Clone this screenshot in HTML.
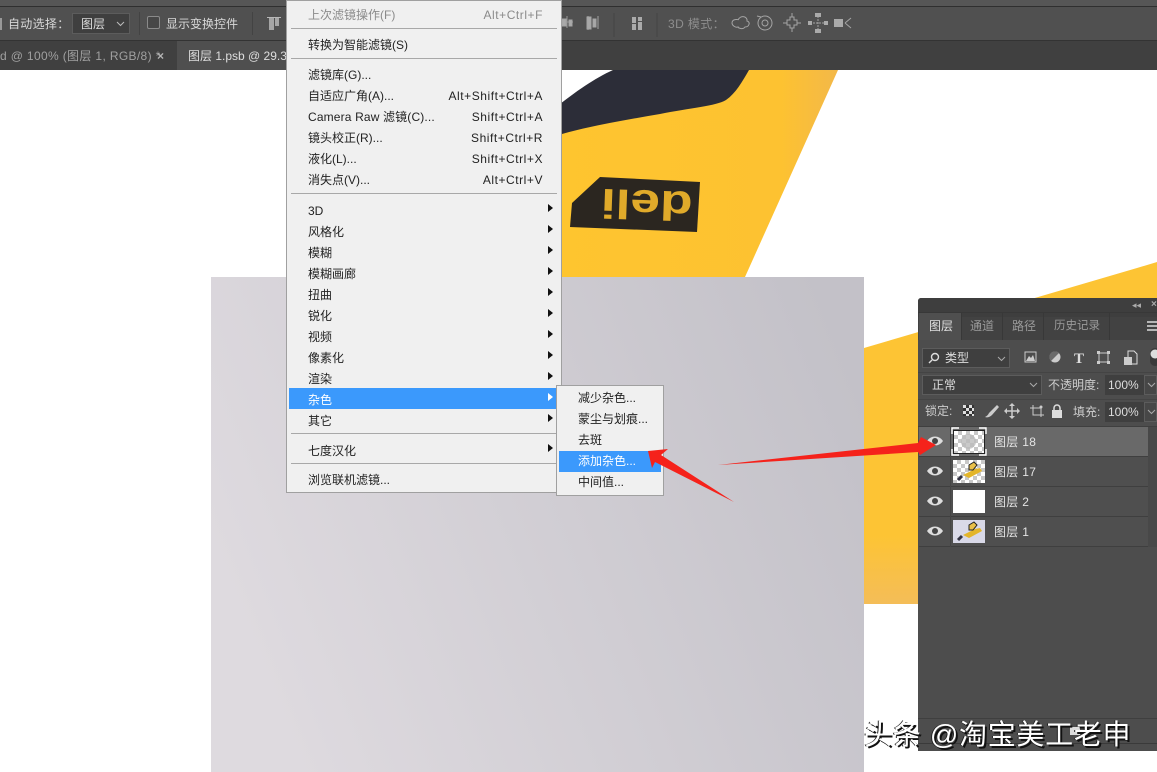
<!DOCTYPE html>
<html><head><meta charset="utf-8"><style>
html,body{margin:0;padding:0;background:#fff}
#r{position:relative;width:1157px;height:772px;overflow:hidden;background:#fff;font-family:"Liberation Sans","Noto Sans CJK SC",sans-serif;font-size:12px}
#r div,#r span.t{position:absolute}
.t{white-space:nowrap;line-height:16px;position:absolute}
.m{color:#222;left:308px}
.k{color:#222;right:614px;letter-spacing:.55px}
.l{color:#dcdcdc}
.a{width:0;height:0;border-left:5px solid #111;border-top:4px solid transparent;border-bottom:4px solid transparent;left:548px}
.sep{left:291px;width:266px;height:1px;background:#a8a8a8}
.row{left:919px;width:229px;height:29px;border-bottom:1px solid #3f3f3f;background:#4f4f4f}
.th{left:953px;width:32px;height:23px;background:#fff}
.ck{background-color:#fff;background-image:linear-gradient(45deg,#c8c8c8 25%,transparent 25%,transparent 75%,#c8c8c8 75%),linear-gradient(45deg,#c8c8c8 25%,transparent 25%,transparent 75%,#c8c8c8 75%);background-size:8px 8px;background-position:0 0,4px 4px}
.dd{background:#3f3f3f;border:1px solid #5c5c5c;box-sizing:border-box}
.wm{font-family:"Liberation Sans","Noto Sans CJK SC",sans-serif;font-size:28px;line-height:32px;color:#fff;text-shadow:2px 2px 0 #111,-1px 0 0 #222;white-space:nowrap;position:absolute}
</style></head><body><div id="r">

<svg style="position:absolute;left:0;top:0" width="1157" height="772">
<defs><linearGradient id="g" x1="0" y1="0.55" x2="1" y2="0.25"><stop offset="0" stop-color="#dedadf"/><stop offset="1" stop-color="#c3c1c8"/></linearGradient>
<linearGradient id="y" x1="0" y1="0" x2="1" y2="0"><stop offset="0" stop-color="#fec52f"/><stop offset=".8" stop-color="#fdc231"/><stop offset="1" stop-color="#f3b849"/></linearGradient>
<linearGradient id="y2" x1="0" y1="0" x2="0" y2="1"><stop offset="0" stop-color="#fdc434"/><stop offset=".8" stop-color="#fdc434"/><stop offset="1" stop-color="#f4bd58"/></linearGradient></defs>
<polygon points="555,108 613,70 838,70 745,277 555,277" fill="url(#y)"/>
<rect x="211" y="277" width="653" height="495" fill="url(#g)"/>
<path d="M555,108 C575,92 595,78 613,70 L749,70 C742,82 736,93 726,100 C716,106 690,108 660,114 C625,120 590,126 562,134 L555,136Z" fill="#2c2d38"/>
<path d="M600,177 L700,182 L697,232 L570,227 L572,203Z" fill="#2b2620"/>
<text transform="translate(693,192) rotate(182) scale(1.3,1)" font-family="Liberation Sans" font-weight="bold" font-size="41" fill="#e0aa2a">deli</text>
<polygon points="864,348 1137,268 1157,262 1157,604 864,604" fill="url(#y2)"/>
</svg>

<!-- toolbar -->
<div style="left:0;top:0;width:1157px;height:6px;background:#565656"></div>
<div style="left:0;top:6px;width:1157px;height:1px;background:#2f2f2f"></div>
<div style="left:0;top:7px;width:1157px;height:33px;background:#505050"></div>
<div style="left:0;top:40px;width:1157px;height:1px;background:#333"></div>
<div style="left:0;top:41px;width:1157px;height:29px;background:#404040"></div>
<div style="left:177px;top:41px;width:120px;height:29px;background:#4f4f4f"></div>
<span class="t" style="left:8px;top:16px;color:#d8d8d8;letter-spacing:.3px">自动选择：</span>
<div class="dd" style="left:72px;top:13px;width:58px;height:21px"></div>
<span class="t" style="left:81px;top:16px;color:#ddd">图层</span>
<svg style="position:absolute;left:116px;top:21px" width="9" height="6"><path d="M1,1 L4.5,4.5 L8,1" fill="none" stroke="#bbb"/></svg>
<div style="left:147px;top:16px;width:11px;height:11px;border:1px solid #8a8a8a;background:#474747;border-radius:2px"></div>
<span class="t" style="left:166px;top:16px;color:#d8d8d8;font-size:12px">显示变换控件</span>
<div style="left:139px;top:12px;width:1px;height:23px;background:#434343"></div>
<div style="left:252px;top:12px;width:1px;height:23px;background:#434343"></div>
<div style="left:267px;top:17px;width:14px;height:1px;background:#b8b8b8"></div>
<div style="left:269px;top:18px;width:5px;height:12px;background:#a5a5a5"></div>
<div style="left:275px;top:18px;width:4px;height:8px;background:#a5a5a5"></div>
<div style="left:0;top:18px;width:2px;height:12px;background:#999"></div>

<svg style="position:absolute;left:560px;top:8px" width="300" height="32" fill="none" stroke="#a4a4a4">
<path d="M1,14 h12 M7,8 v12 M28,8 v14" stroke="#999"/><rect x="2" y="11" width="4" height="7" fill="#aaa"/><rect x="9" y="12" width="3" height="6" fill="#aaa"/>
<rect x="27" y="9" width="4" height="12" fill="#a8a8a8"/><rect x="33" y="11" width="3" height="8" fill="#a8a8a8"/><path d="M38,8 v13"/>
<rect x="72" y="9" width="4" height="6" fill="#aaa" stroke="none"/><rect x="72" y="16" width="4" height="6" fill="#aaa" stroke="none"/><rect x="78" y="9" width="4" height="4" fill="#aaa" stroke="none"/><rect x="78" y="14" width="4" height="8" fill="#aaa" stroke="none"/>
<path d="M54,5 v24 M97,5 v24" stroke="#444"/>
<path d="M172,15 c0,-4 6,-4 6,-3 c3,-6 10,-3 9,1 c4,1 2,6 -2,6 c-2,3 -7,1 -7,0 c-3,1 -6,-2 -6,-4z"/>
<circle cx="205" cy="15" r="7"/><circle cx="205" cy="15" r="3"/><path d="M197,8 l4,1"/>
<path d="M230,9 h4 v3 h3 v5 h-3 v3 h-4 v-3 h-3 v-5 h3z M232,5 v4 M232,20 v4 M223,15 h4 M237,15 h4"/>
<path d="M250,15 h16 M258,8 v16" stroke-dasharray="2 1"/><rect x="255" y="5" width="6" height="4" fill="#aaa" stroke="none"/><rect x="255" y="21" width="6" height="4" fill="#aaa" stroke="none"/><rect x="248" y="13" width="4" height="4" fill="#aaa" stroke="none"/><rect x="264" y="13" width="4" height="4" fill="#aaa" stroke="none"/>
<rect x="274" y="11" width="9" height="8" fill="#aaa" stroke="none"/><path d="M285,15 l6,-5 M285,15 l6,5"/>
</svg>
<span class="t" style="left:668px;top:16px;color:#8e8e8e;letter-spacing:.4px">3D 模式：</span>

<span class="t" style="left:0;top:48px;color:#a0a0a0;font-size:12px;letter-spacing:.35px">d @ 100% (图层 1, RGB/8) *</span>
<span class="t" style="left:157px;top:48px;color:#b5b5b5;font-weight:bold">×</span>
<span class="t" style="left:188px;top:48px;color:#dedede">图层 1.psb @ 29.3</span>

<!-- main menu -->
<div style="left:286px;top:0;width:274px;height:491px;background:#f0f0f0;border:1px solid #a0a0a0"></div>
<div style="left:289px;top:388px;width:268px;height:21px;background:#3b99fc"></div>
<div class="sep" style="top:28px"></div>
<div class="sep" style="top:58px"></div>
<div class="sep" style="top:193px"></div>
<div class="sep" style="top:433px"></div>
<div class="sep" style="top:463px"></div>

<span class="t m" style="top:7px;color:#8a8a8a">上次滤镜操作(F)</span><span class="t k" style="top:7px;color:#8a8a8a">Alt+Ctrl+F</span>
<span class="t m" style="top:37px">转换为智能滤镜(S)</span>
<span class="t m" style="top:67px">滤镜库(G)...</span>
<span class="t m" style="top:88px">自适应广角(A)...</span><span class="t k" style="top:88px">Alt+Shift+Ctrl+A</span>
<span class="t m" style="top:109px;letter-spacing:.15px">Camera Raw 滤镜(C)...</span><span class="t k" style="top:109px">Shift+Ctrl+A</span>
<span class="t m" style="top:130px">镜头校正(R)...</span><span class="t k" style="top:130px">Shift+Ctrl+R</span>
<span class="t m" style="top:151px">液化(L)...</span><span class="t k" style="top:151px">Shift+Ctrl+X</span>
<span class="t m" style="top:172px">消失点(V)...</span><span class="t k" style="top:172px">Alt+Ctrl+V</span>
<span class="t m" style="top:203px">3D</span>
<span class="t m" style="top:224px">风格化</span>
<span class="t m" style="top:245px">模糊</span>
<span class="t m" style="top:266px">模糊画廊</span>
<span class="t m" style="top:287px">扭曲</span>
<span class="t m" style="top:308px">锐化</span>
<span class="t m" style="top:329px">视频</span>
<span class="t m" style="top:350px">像素化</span>
<span class="t m" style="top:371px">渲染</span>
<span class="t m" style="top:392px;color:#fff">杂色</span>
<span class="t m" style="top:413px">其它</span>
<span class="t m" style="top:443px">七度汉化</span>
<span class="t m" style="top:472px">浏览联机滤镜...</span>
<div class="a" style="top:204px"></div><div class="a" style="top:225px"></div><div class="a" style="top:246px"></div><div class="a" style="top:267px"></div><div class="a" style="top:288px"></div><div class="a" style="top:309px"></div><div class="a" style="top:330px"></div><div class="a" style="top:351px"></div><div class="a" style="top:372px"></div>
<div class="a" style="top:393px;border-left-color:#fff"></div><div class="a" style="top:414px"></div><div class="a" style="top:444px"></div>

<!-- submenu -->
<div style="left:556px;top:385px;width:106px;height:109px;background:#f0f0f0;border:1px solid #a0a0a0"></div>
<div style="left:559px;top:451px;width:102px;height:21px;background:#3b99fc"></div>
<span class="t" style="left:578px;top:390px;color:#222">减少杂色...</span>
<span class="t" style="left:578px;top:411px;color:#222">蒙尘与划痕...</span>
<span class="t" style="left:578px;top:432px;color:#222">去斑</span>
<span class="t" style="left:578px;top:453px;color:#fff">添加杂色...</span>
<span class="t" style="left:578px;top:474px;color:#222">中间值...</span>

<!-- panel -->
<div style="left:918px;top:298px;width:239px;height:453px;background:#4d4d4d;border-top-left-radius:3px"></div>
<div style="left:918px;top:298px;width:239px;height:19px;background:#3e3e3e;border-top-left-radius:3px"></div>
<div style="left:918px;top:317px;width:239px;height:23px;background:#424242"></div>
<div style="left:919px;top:312px;width:42px;height:28px;background:#4f4f4f"></div>
<div style="left:961px;top:312px;width:1px;height:28px;background:#383838"></div>
<div style="left:1002px;top:312px;width:1px;height:28px;background:#383838"></div>
<div style="left:1043px;top:312px;width:1px;height:28px;background:#383838"></div>
<div style="left:1109px;top:312px;width:1px;height:28px;background:#383838"></div>
<div style="left:918px;top:312px;width:239px;height:1px;background:#383838"></div>
<span class="t" style="left:929px;top:318px;color:#e0e0e0">图层</span>
<span class="t" style="left:970px;top:318px;color:#9a9a9a">通道</span>
<span class="t" style="left:1012px;top:318px;color:#9a9a9a">路径</span>
<span class="t" style="left:1054px;top:318px;color:#9a9a9a;font-size:11.5px">历史记录</span>
<span class="t" style="left:1132px;top:299px;color:#aaa;font-size:9px;line-height:12px">◂◂</span>
<span class="t" style="left:1151px;top:299px;color:#aaa;font-size:10px;line-height:12px;font-weight:bold">×</span>
<div style="left:1147px;top:321px;width:10px;height:2px;background:#b5b5b5"></div>
<div style="left:1147px;top:325px;width:10px;height:2px;background:#b5b5b5"></div>
<div style="left:1147px;top:329px;width:10px;height:2px;background:#b5b5b5"></div>

<div class="dd" style="left:922px;top:348px;width:88px;height:20px"></div>
<svg style="position:absolute;left:927px;top:351px" width="14" height="14" fill="none" stroke="#ddd" stroke-width="1.4"><circle cx="8" cy="6" r="3.5"/><path d="M5,9 L2,12"/></svg>
<span class="t" style="left:945px;top:350px;color:#ddd">类型</span>
<svg style="position:absolute;left:997px;top:356px" width="9" height="6"><path d="M1,1 L4.5,4.5 L8,1" fill="none" stroke="#aaa"/></svg>
<svg style="position:absolute;left:1020px;top:348px" width="137" height="20">
<rect x="5" y="4" width="11" height="10" fill="none" stroke="#ccc"/><path d="M6,13 L9,8 L11,10 L13,7 L15,13Z" fill="#ccc"/>
<circle cx="35" cy="9" r="5.5" fill="#ccc"/><path d="M31,13 A5.5,5.5 0 0 1 39,5 Z" fill="#6a6a6a"/>
<text x="54" y="15" font-family="Liberation Serif" font-weight="bold" font-size="15" fill="#ddd">T</text>
<rect x="79" y="5" width="9" height="9" fill="none" stroke="#ccc"/><rect x="77" y="3" width="3" height="3" fill="#ccc"/><rect x="87" y="3" width="3" height="3" fill="#ccc"/><rect x="77" y="13" width="3" height="3" fill="#ccc"/><rect x="87" y="13" width="3" height="3" fill="#ccc"/>
<path d="M108,3 h6 l3,3 v10 h-9z" fill="none" stroke="#ddd"/><rect x="104" y="9" width="8" height="8" fill="#ccc"/>
<rect x="130" y="0" width="10" height="18" rx="5" fill="#3a3a3a"/><circle cx="135" cy="6" r="4.5" fill="#ddd"/>
</svg>
<div style="left:918px;top:372px;width:239px;height:1px;background:#444"></div>
<div class="dd" style="left:922px;top:375px;width:120px;height:20px"></div>
<span class="t" style="left:932px;top:377px;color:#ddd">正常</span>
<svg style="position:absolute;left:1029px;top:382px" width="9" height="6"><path d="M1,1 L4.5,4.5 L8,1" fill="none" stroke="#aaa"/></svg>
<span class="t" style="left:1048px;top:377px;color:#ccc">不透明度:</span>
<div style="left:1105px;top:375px;width:39px;height:20px;background:#3f3f3f"></div>
<div style="left:1144px;top:375px;width:13px;height:20px;background:#474747;border:1px solid #5c5c5c;box-sizing:border-box"></div>
<span class="t" style="left:1108px;top:377px;color:#ddd">100%</span>
<svg style="position:absolute;left:1147px;top:382px" width="9" height="6"><path d="M1,1 L4.5,4.5 L8,1" fill="none" stroke="#aaa"/></svg>
<div style="left:918px;top:399px;width:239px;height:1px;background:#444"></div>
<span class="t" style="left:925px;top:403px;color:#ccc">锁定:</span>
<div class="ck" style="left:963px;top:405px;width:11px;height:11px;background-color:#ddd;background-image:linear-gradient(45deg,#333 25%,transparent 25%,transparent 75%,#333 75%),linear-gradient(45deg,#333 25%,transparent 25%,transparent 75%,#333 75%);background-size:6px 6px;background-position:0 0,3px 3px"></div>
<svg style="position:absolute;left:984px;top:403px" width="100" height="16">
<path d="M1,14 C3,13 4,12 5,10 L13,2 L15,4 L8,12 C6,14 3,15 1,14Z" fill="#ccc"/>
<path d="M28,2 v12 M22,8 h12" stroke="#ccc" stroke-width="1.5"/><path d="M28,0 l3,3 h-6z M28,16 l3,-3 h-6z M20,8 l3,-3 v6z M36,8 l-3,-3 v6z" fill="#ccc"/>
<path d="M46,5 h11 v9 M49,2 v10 h11" fill="none" stroke="#ccc"/><circle cx="57" cy="4" r="1.5" fill="#ccc"/>
<rect x="68" y="7" width="10" height="8" fill="#ddd"/><path d="M70,7 v-2 a3,3 0 0 1 6,0 v2" fill="none" stroke="#ddd" stroke-width="1.5"/>
</svg>
<span class="t" style="left:1073px;top:404px;color:#ccc">填充:</span>
<div style="left:1105px;top:402px;width:39px;height:20px;background:#3f3f3f"></div>
<div style="left:1144px;top:402px;width:13px;height:20px;background:#474747;border:1px solid #5c5c5c;box-sizing:border-box"></div>
<span class="t" style="left:1108px;top:404px;color:#ddd">100%</span>
<svg style="position:absolute;left:1147px;top:409px" width="9" height="6"><path d="M1,1 L4.5,4.5 L8,1" fill="none" stroke="#aaa"/></svg>
<div style="left:918px;top:426px;width:239px;height:1px;background:#3f3f3f"></div>

<div class="row" style="top:427px;background:#696969"></div>
<div class="row" style="top:457px"></div>
<div class="row" style="top:487px"></div>
<div class="row" style="top:517px"></div>
<div style="left:950px;top:427px;width:1px;height:120px;background:#454545"></div>
<div style="left:1148px;top:427px;width:9px;height:120px;background:#484848"></div>

<svg style="position:absolute;left:926px;top:432px" width="18" height="110">
<g id="e"><path d="M1,9 C5,3 13,3 17,9 C13,15 5,15 1,9Z" fill="#ddd"/><circle cx="9" cy="9" r="3" fill="#444"/></g>
<use href="#e" y="30"/><use href="#e" y="60"/><use href="#e" y="90"/>
</svg>

<div class="th ck" style="top:430px;border:1px solid #222;box-sizing:border-box;width:32px;height:24px"></div>
<div style="left:961px;top:434px;width:15px;height:15px;border-radius:50%;background:#bbb;opacity:.8"></div>
<svg style="position:absolute;left:951px;top:427px" width="36" height="30" fill="none" stroke="#fff" stroke-width="1.4"><path d="M1,7 V1 H8 M28,1 H35 V7 M1,22 V28 H8 M28,28 H35 V22"/></svg>
<div class="th ck" style="top:460px"></div>
<svg style="position:absolute;left:953px;top:460px" width="32" height="23"><path d="M10,15 L22,9 L27,8 L29,11 L16,18Z" fill="#e3b52a"/><path d="M16,5 l5,-3 l3,3 l-4,5 l-4,0z" fill="#e9c04a" stroke="#222" stroke-width="1"/><path d="M9,16 l-4,4" stroke="#334" stroke-width="3"/></svg>
<div class="th" style="top:490px"></div>
<div class="th" style="top:520px;background:#d9d9e8"></div>
<svg style="position:absolute;left:953px;top:520px" width="32" height="23"><path d="M10,15 L22,9 L27,8 L29,11 L16,18Z" fill="#e3b52a"/><path d="M16,5 l5,-3 l3,3 l-4,5 l-4,0z" fill="#e9c04a" stroke="#222" stroke-width="1"/><path d="M9,16 l-4,4" stroke="#334" stroke-width="3"/></svg>
<span class="t" style="left:994px;top:434px;color:#e4e4e4;letter-spacing:.3px">图层 18</span>
<span class="t" style="left:994px;top:464px;color:#e4e4e4;letter-spacing:.3px">图层 17</span>
<span class="t" style="left:994px;top:494px;color:#e4e4e4;letter-spacing:.3px">图层 2</span>
<span class="t" style="left:994px;top:524px;color:#e4e4e4;letter-spacing:.3px">图层 1</span>

<div style="left:918px;top:718px;width:239px;height:1px;background:#3f3f3f"></div>
<div style="left:918px;top:743px;width:239px;height:1px;background:#3a3a3a"></div>
<div style="left:1070px;top:727px;width:10px;height:8px;background:#ddd"></div>

<!-- arrows -->
<svg style="position:absolute;left:0;top:0" width="1157" height="772">
<polygon points="718,465 918,443 921,437 936,445 920,455 918,452" fill="#f5221b"/>
<polygon points="648,451 668,449 661,455 734,502 655,462 652,468" fill="#f5221b"/>
</svg>

<span class="wm" style="left:864px;top:719px;letter-spacing:.7px">头条 @淘宝美工老申</span>
</div></body></html>
